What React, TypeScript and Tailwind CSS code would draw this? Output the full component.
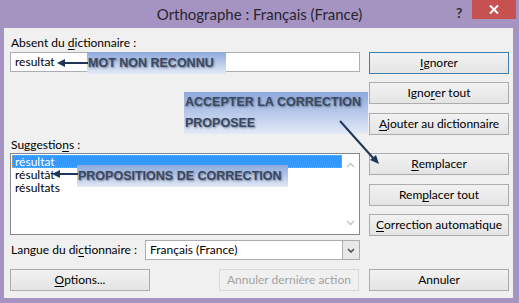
import type { ReactNode } from "react"
import clsx from "clsx"

// Access key letter, underlined as in the Windows dialog
function U({ children }: { children: ReactNode }) {
  return <span className="underline underline-offset-[2px] decoration-[1px]">{children}</span>
}

function Btn({
  children,
  focused,
  disabled,
  className,
}: {
  children: ReactNode
  focused?: boolean
  disabled?: boolean
  className?: string
}) {
  return (
    <div
      className={clsx(
        "h-[22px] flex items-center justify-center border text-[12px]",
        disabled
          ? "border-[#d9d9d9] bg-[#f0f0f0] text-[#a3a3a3]"
          : "bg-gradient-to-b from-[#f2f2f2] to-[#e4e4e4] text-black",
        !disabled && (focused ? "border-[#3c7fb1]" : "border-[#acacac]"),
        className
      )}
    >
      {children}
    </div>
  )
}

// Callout boxes pasted over the screenshot
function Callout({ className, children }: { className: string; children: ReactNode }) {
  return (
    <div
      className={clsx(
        "absolute bg-gradient-to-b from-[#8ea9db] to-[#e3eaf7] px-[1px] font-['Liberation_Sans',Arial,sans-serif] font-bold text-[12.5px] text-[#3a4862] [text-shadow:1px_1px_2px_rgba(30,40,60,0.5)]",
        className
      )}
    >
      {children}
    </div>
  )
}

export default function App() {
  return (
    <div className="relative w-[519px] h-[303px] bg-[#a594c1] overflow-hidden font-['Lato','Open_Sans',sans-serif] text-black">
      {/* Title bar */}
      <div className="h-[28px] flex items-center justify-center text-[15px] text-[#29252f]">
        Orthographe : Français (France)
      </div>
      <div className="absolute left-[456px] top-[2px] text-[14px] font-bold text-[#2e2e2e]">?</div>
      <div className="absolute right-[3px] top-0 w-[44px] h-[19px] bg-[#c75050] flex items-center justify-center">
        <svg width="10" height="9" viewBox="0 0 10 9">
          <path d="M1 0.5 L9 8.5 M9 0.5 L1 8.5" stroke="white" strokeWidth="2" />
        </svg>
      </div>

      {/* Client area */}
      <div className="ml-[4px] mr-[6px] h-[270px] bg-[#f0f0f0] flex pl-[6px] pt-[7px] gap-[9px]">
        {/* Left column */}
        <div className="w-[350px] flex flex-col">
          <div className="text-[12px] leading-[16px] pl-[1px]">
            Absent du <U>d</U>ictionnaire :
          </div>
          <div className="mt-[1px] h-[20px] border border-[#abadb3] bg-white flex items-center pl-[4px] text-[12px]">
            resultat
          </div>

          <div className="mt-[65px] text-[12px] leading-[16px] pl-[1px]">
            Suggestio<U>n</U>s :
          </div>
          <div className="h-[82px] border border-[#828790] bg-white flex">
            <div className="flex-1 flex flex-col pl-[1px] pt-[1px] text-[12px] leading-[13px]">
              <div className="h-[13px] bg-[#3399ff] text-white pl-[3px] outline-1 outline-dotted outline-[#e0a050] -outline-offset-1">
                résultat
              </div>
              <div className="self-start pl-[3px]">résultât</div>
              <div className="self-start pl-[3px]">résultats</div>
            </div>
            <div className="w-[17px] flex flex-col items-center justify-between py-[8px]">
              <svg width="9" height="6" viewBox="0 0 9 6">
                <path d="M1 5 L4.5 1.5 L8 5" stroke="#c4c4c4" strokeWidth="1.5" fill="none" />
              </svg>
              <svg width="9" height="6" viewBox="0 0 9 6">
                <path d="M1 1 L4.5 4.5 L8 1" stroke="#c4c4c4" strokeWidth="1.5" fill="none" />
              </svg>
            </div>
          </div>

          <div className="mt-[5px] h-[20px] flex items-center">
            <div className="text-[12px] pl-[1px]">
              Langue du di<U>c</U>tionnaire :
            </div>
            <div className="ml-auto w-[215px] h-full border border-[#abadb3] bg-white flex items-center">
              <div className="flex-1 pl-[4px] text-[12px]">Français (France)</div>
              <div className="w-[17px] h-full border-l border-[#abadb3] bg-[#e8e8e8] flex items-center justify-center">
                <svg width="8" height="5" viewBox="0 0 8 5">
                  <path d="M1 1 L4 4 L7 1" stroke="#4a4a4a" strokeWidth="1.5" fill="none" />
                </svg>
              </div>
            </div>
          </div>

          <div className="mt-[9px] flex justify-between pr-[1px]">
            <Btn className="w-[140px]">
              <U>O</U>ptions...
            </Btn>
            <Btn disabled className="w-[140px]">
              Annuler dernière action
            </Btn>
          </div>
        </div>

        {/* Right column */}
        <div className="w-[140px] flex flex-col">
          <Btn focused className="mt-[17px]">
            <U>I</U>gnorer
          </Btn>
          <Btn className="mt-[8px]">
            Igno<U>r</U>er tout
          </Btn>
          <Btn className="mt-[9px]">
            <U>A</U>jouter au dictionnaire
          </Btn>
          <Btn className="mt-[18px]">
            <U>R</U>emplacer
          </Btn>
          <Btn className="mt-[9px]">
            Rem<U>p</U>lacer tout
          </Btn>
          <Btn className="mt-[8px]">
            <U>C</U>orrection automatique
          </Btn>
          <Btn className="mt-[33px]">Annuler</Btn>
        </div>
      </div>

      {/* Annotations */}
      <Callout className="left-[87px] top-[52px] w-[139px] h-[22px] flex items-center">MOT NON RECONNU</Callout>
      <Callout className="left-[184px] top-[92px] w-[184px] h-[42px] leading-[21px]">
        ACCEPTER LA CORRECTION
        <br />
        PROPOSEE
      </Callout>
      <Callout className="left-[77px] top-[165px] w-[211px] h-[22px] flex items-center">
        PROPOSITIONS DE CORRECTION
      </Callout>

      <svg className="absolute left-0 top-0 pointer-events-none" width="519" height="303" viewBox="0 0 519 303">
        <g stroke="#1f3658" strokeWidth="2" fill="#1f3658">
          <line x1="88" y1="63" x2="63" y2="63" />
          <path d="M57 63 L65 59 L65 67 Z" stroke="none" />
          <line x1="78" y1="174" x2="58" y2="174" />
          <path d="M52 174 L60 170 L60 178 Z" stroke="none" />
          <line x1="340" y1="121" x2="374" y2="159" />
          <path d="M379 164 L370 160 L376 155 Z" stroke="none" />
        </g>
      </svg>
    </div>
  )
}
